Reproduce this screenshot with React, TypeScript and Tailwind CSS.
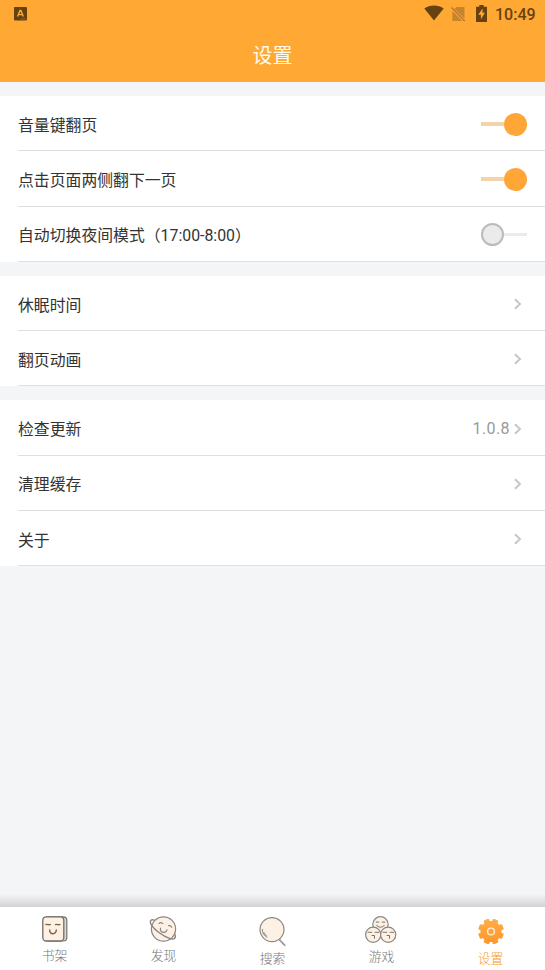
import type { ReactNode } from "react";

function StatusBar() {
  return (
    <div className="flex h-7 items-center justify-between pr-[9px] pl-[14px] text-[#664211]">
      <svg width="13" height="14" viewBox="0 0 13 14">
        <rect width="13" height="13.5" rx="1" fill="currentColor" />
        <path d="M3.6 9.6 6 3.4h.9l2.400 6.200M4.600 7.600h3.700" fill="none" stroke="#ffa834" strokeWidth="1.4" />
        <path d="M7 11.8h5" stroke="#a97126" strokeWidth="1" strokeDasharray="1.5 .7" />
      </svg>
      <div className="flex items-center">
        <svg className="mb-[2px]" width="20" height="16" viewBox="0 0 20 16">
          <path d="M.3 3.6C5.5-.6 14.500-.6 19.700 3.600L10 15.500Z" fill="currentColor" />
        </svg>
        <svg className="mb-px ml-[7px]" width="15" height="16" viewBox="0 0 15 16">
          <path d="M5.500 1H13.500V12.800L3.600 2.900ZM1.400 5 11.500 15H1.400Z" fill="#c58530" />
          <path d="m.6 1.500 13.200 13.600" stroke="#b1752a" strokeWidth="1.300" />
        </svg>
        <svg className="mb-[2px] ml-[10px]" width="11" height="17" viewBox="0 0 11 17">
          <path d="M3.300 0h4.400v1.700H11V17H0V1.700h3.300Z" fill="currentColor" />
          <path d="M6.500 3.500 2.300 9.800h2.600v4.500l4-6.500H6.500Z" fill="#ffa834" />
        </svg>
        <span className="ml-[8px] w-[41px] pt-px text-[16px] leading-4 font-medium">10:49</span>
      </div>
    </div>
  );
}

function Toggle({ on }: { on: boolean }) {
  return on ? (
    <span className="mr-[18px] flex h-[23px] w-[46px] items-center">
      <span className="h-1 w-[23px] bg-[#f3d3aa]" />
      <span className="size-[23px] rounded-full bg-[#ffa637]" />
    </span>
  ) : (
    <span className="mr-[18px] flex h-[23px] w-[46px] items-center">
      <span className="size-[23px] rounded-full border-2 border-[#bbbbbb] bg-[#ebebeb]" />
      <span className="h-[3px] w-[23px] bg-[#ebebeb]" />
    </span>
  );
}

function Chevron() {
  return (
    <svg className="mr-[23px]" width="9" height="12" viewBox="0 0 9 12">
      <path d="m2 1.200 5 4.800-5 4.800" fill="none" stroke="#c6c6c6" strokeWidth="1.900" />
    </svg>
  );
}

function Row({ label, children }: { label: ReactNode; children: ReactNode }) {
  return (
    <div className="ml-[18px] flex h-[55.300px] items-center justify-between border-b-[1.500px] border-[#dfdfe0] text-[15.850px] text-[#333]">
      <span className="pt-[4.800px]">{label}</span>
      <span className="flex items-center pt-[2px]">{children}</span>
    </div>
  );
}

const line = { fill: "none", stroke: "#8c8782", strokeWidth: 1.2, strokeLinecap: "round" } as const;

function BookIcon() {
  return (
    <svg width="26" height="26" viewBox="0 0 26 26">
      <rect x="3" y=".8" width="21.800" height="24.200" rx="3.500" fill="#ddd9d5" stroke="#77736f" strokeWidth="1.200" />
      <rect x=".8" y=".8" width="21" height="24.200" rx="3.500" fill="#fff1e2" stroke="#706b66" strokeWidth="1.300" />
      <path d="M3.800 8.600c1.700-.7 3 .7 4.500-.1M13.500 8.600c1.700-.7 3 .7 4.500-.1M7.700 14c0 5 6.600 5 6.600 0" {...line} stroke="#756553" strokeWidth="1.400" />
    </svg>
  );
}

function PlanetIcon() {
  return (
    <svg width="28" height="27" viewBox="0 0 28 27">
      <circle cx="14.500" cy="13" r="12.100" fill="#fdf1e6" stroke="#8c8782" strokeWidth="1.200" />
      <path d="M5.300 4.200C2.600 3 .8 4.300 1.500 7c1.300 4.900 12 13.200 19.500 15.600 4.500 1.400 6.500-.8 4.700-4.600" {...line} strokeWidth="1.400" />
      <path d="M10 7.400c1.300-1 2.700-.7 3.700.2M19.500 9.700c1.300-.3 2.600.3 3.200 1.600M11.500 12.200c-.8 5 5.200 5.600 6.500 1.700" {...line} />
    </svg>
  );
}

function SearchIcon() {
  return (
    <svg width="27" height="30" viewBox="0 0 27 30">
      <circle cx="13" cy="12.600" r="12" fill="#fdf0e5" stroke="#8c8782" strokeWidth="1.200" />
      <path d="m20 22.800 5.500 6M20.800 22.200l5.400 6M3.300 12.300c-.2 3.700 2 6.500 4.700 8M4.700 15.300 7.400 19" {...line} strokeWidth="1" />
    </svg>
  );
}

function FacesIcon() {
  return (
    <svg width="32" height="28" viewBox="0 0 32 28">
      <g fill="#fdf1e6" stroke="#8c8782" strokeWidth="1.200">
        <circle cx="15.500" cy="8.400" r="7.700" />
        <circle cx="8.200" cy="18.800" r="7.600" />
        <circle cx="23.200" cy="18.800" r="7.600" />
      </g>
      <path d="M11.200 6.100h2.600M17.300 6.100h2.600M11.600 9.300c1.500 2.600 6.200 2.600 7.700 0M3 16.300c1.400-.7 2.400.7 3.800 0M10 16.300c1.400-.7 2.400.7 3.800 0M7 19.500h2.500v2.800M18 16.300c1.400-.7 2.400.7 3.800 0M25 16.300c1.400-.7 2.400.7 3.800 0M22 19.500h2.500v2.800" {...line} stroke="#77716b" strokeWidth="1" />
    </svg>
  );
}

const toothAngles = [22.5, 67.5, 112.5, 157.5, 202.5, 247.5, 292.5, 337.5];

function GearIcon() {
  return (
    <svg width="26" height="25" viewBox="0 0 26 25">
      <defs>
        <linearGradient id="gear" x1="0" y1="0" x2="0" y2="1">
          <stop stopColor="#ffad49" />
          <stop offset="1" stopColor="#ff962b" />
        </linearGradient>
        <clipPath id="teeth">
          <circle cx="13" cy="12.500" r="10.500" />
          {toothAngles.map((a) => (
            <rect key={a} x="10.100" y="-.4" width="5.800" height="6" rx="1.200" transform={`rotate(${a} 13 12.500)`} />
          ))}
        </clipPath>
      </defs>
      <rect width="26" height="25" fill="url(#gear)" clipPath="url(#teeth)" />
      <circle cx="13" cy="12.500" r="3.400" fill="none" stroke="#ffecd2" strokeWidth="1.400" />
    </svg>
  );
}

const tabs = [
  { label: "书架", icon: <BookIcon />, iconBox: "pt-[9px] h-[40px]", color: "text-[#777]" },
  { label: "发现", icon: <PlanetIcon />, iconBox: "pt-[9px] h-[40px] pr-[1px]", color: "text-[#777]" },
  { label: "搜索", icon: <SearchIcon />, iconBox: "pt-[10px] h-[43px]", color: "text-[#777]" },
  { label: "游戏", icon: <FacesIcon />, iconBox: "pt-[9px] h-[41px] pr-[1px]", color: "text-[#777]" },
  { label: "设置", icon: <GearIcon />, iconBox: "pt-[12px] h-[43px]", color: "text-[#f79a1f]" },
];

export default function App() {
  return (
    <div className="flex h-[970px] w-[545px] flex-col overflow-hidden bg-[#f4f5f7] font-[Roboto,'Noto_Sans_CJK_SC',sans-serif]">
      <header className="h-[82.400px] shrink-0 bg-[#ffa834]">
        <StatusBar />
        <h1 className="flex h-[54px] items-center justify-center pt-[1.500px] text-[20px] text-[#fffbea]">设置</h1>
      </header>
      <main className="flex grow flex-col gap-[14px] pt-[13.600px]">
        <section className="bg-white">
          <Row label="音量键翻页"><Toggle on /></Row>
          <Row label="点击页面两侧翻下一页"><Toggle on /></Row>
          <Row label="自动切换夜间模式（17:00-8:00）"><Toggle on={false} /></Row>
        </section>
        <section className="bg-white">
          <Row label="休眠时间"><Chevron /></Row>
          <Row label="翻页动画"><Chevron /></Row>
        </section>
        <section className="bg-white">
          <Row label="检查更新">
            <span className="mr-[3px] text-[16px] tracking-[0.400px] text-[#999]">1.0.8</span>
            <Chevron />
          </Row>
          <Row label="清理缓存"><Chevron /></Row>
          <Row label="关于"><Chevron /></Row>
        </section>
      </main>
      <div className="h-3 shrink-0 bg-linear-to-b from-[#f1f2f4] to-[#d2d2d6]" />
      <nav className="grid h-[63px] shrink-0 grid-cols-5 bg-white">
        {tabs.map((tab) => (
          <div key={tab.label} className="flex flex-col items-center">
            <span className={`flex items-start ${tab.iconBox}`}>{tab.icon}</span>
            <span className={`text-[12.800px] leading-[18px] font-light ${tab.color}`}>{tab.label}</span>
          </div>
        ))}
      </nav>
    </div>
  );
}
